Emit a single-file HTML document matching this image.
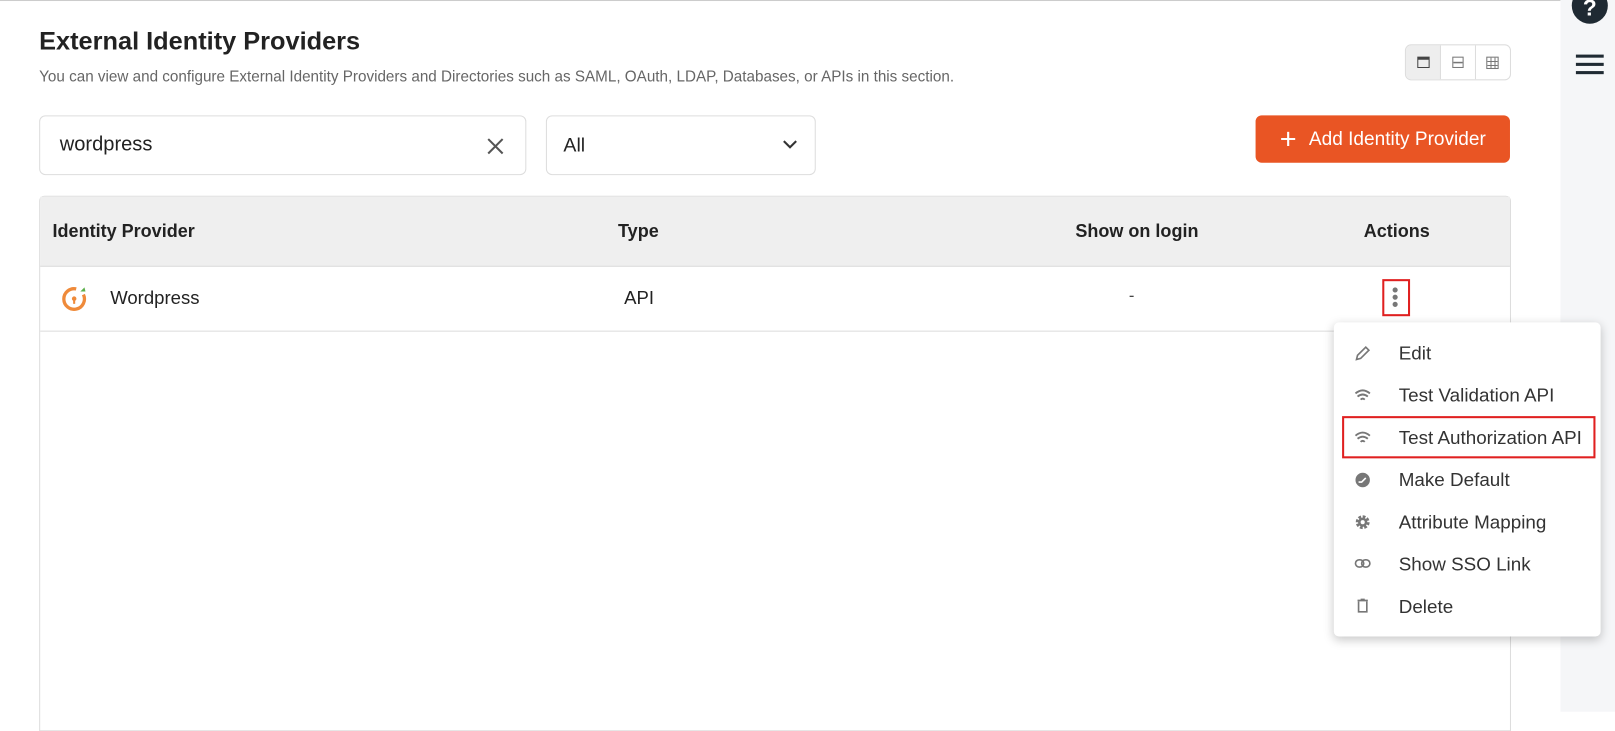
<!DOCTYPE html>
<html><head><style>
*{box-sizing:border-box;margin:0;padding:0}
body{width:1615px;height:691px;overflow:hidden;background:#fff;font-family:"Liberation Sans",sans-serif;color:#222;position:relative}
#w{position:absolute;left:0;top:0;width:1568px;height:671px;transform:scale(1.03);transform-origin:0 0}
.abs{position:absolute}
.side{left:1515px;top:0;width:100px;height:691px;background:#f5f6f8}
.topline{left:0;top:0;width:1515px;height:1px;background:#ccc}
h1{position:absolute;left:38px;top:27px;font-size:24.6px;font-weight:bold;color:#222}
.sub{left:38px;top:67px;font-size:14.8px;color:#666}
.box{border:1px solid #ddd;border-radius:6px;background:#fff}
.btn{left:1219px;top:112px;width:247px;height:46px;background:#e95524;border-radius:6px;color:#fff;font-size:18.5px;display:flex;align-items:center;justify-content:center;gap:12px}
.th{font-size:17.5px;font-weight:bold;color:#222;top:214px}
.menu{left:1295px;top:313px;width:259px;height:305px;background:#fff;border-radius:5px;box-shadow:0 3px 10px rgba(0,0,0,.22)}
.mi{position:absolute;left:63px;font-size:18.3px;color:#333}
.ic{position:absolute;left:20px}
</style></head><body><div id="w">
<div class="abs topline"></div>
<div class="abs side">
<div class="abs" style="left:11px;top:-12px;width:35px;height:35px;border-radius:50%;background:#1f2a33;color:#fff;font-weight:bold;font-size:22px;text-align:center;line-height:40px">?</div>
<div class="abs" style="left:15px;top:53px;width:27px;height:3px;background:#1f2a33;box-shadow:0 8px 0 #1f2a33,0 16px 0 #1f2a33"></div>
</div>
<h1>External Identity Providers</h1>
<div class="abs sub">You can view and configure External Identity Providers and Directories such as SAML, OAuth, LDAP, Databases, or APIs in this section.</div>
<div class="abs box" style="left:1364px;top:43px;width:103px;height:35px;display:flex;overflow:hidden">
<div style="width:35px;background:#eee;border-right:1px solid #ddd;display:flex;align-items:center;justify-content:center"><div style="width:12px;height:11px;border:1.5px solid #444;border-top-width:3px"></div></div>
<div style="width:34px;border-right:1px solid #ddd;display:flex;align-items:center;justify-content:center"><div style="width:11px;height:11px;border:1.5px solid #777;background:linear-gradient(#777,#777) center/100% 1.5px no-repeat"></div></div>
<div style="width:34px;display:flex;align-items:center;justify-content:center"><div style="width:12px;height:12px;border:1px solid #777;background:linear-gradient(90deg,transparent 3px,#777 3px,#777 4px,transparent 4px,transparent 7px,#777 7px,#777 8px,transparent 8px),linear-gradient(transparent 3px,#777 3px,#777 4px,transparent 4px,transparent 7px,#777 7px,#777 8px,transparent 8px)"></div></div>
</div>
<div class="abs box" style="left:38px;top:112px;width:473px;height:58px"><span class="abs" style="left:19px;top:16px;font-size:19.5px;color:#222">wordpress</span>
<svg class="abs" style="left:432px;top:19px" width="20" height="20" viewBox="0 0 20 20"><path d="M3 3L17 17M17 3L3 17" stroke="#555" stroke-width="2"/></svg></div>
<div class="abs box" style="left:530px;top:112px;width:262px;height:58px"><span class="abs" style="left:16px;top:18px;font-size:19px">All</span>
<svg class="abs" style="left:229px;top:22px" width="14" height="10" viewBox="0 0 14 10"><path d="M1 2L7 8L13 2" stroke="#333" stroke-width="2" fill="none"/></svg></div>
<div class="abs btn"><span style="font-size:28px;font-weight:300;line-height:20px">+</span><span>Add Identity Provider</span></div>
<div class="abs" style="left:38px;top:190px;width:1429px;height:520px;border:1px solid #ddd;border-radius:5px 5px 0 0">
<div style="height:68px;background:#efefef;border-bottom:1px solid #ddd"></div>
<div style="height:63px;border-bottom:1px solid #ddd"></div>
</div>
<div class="abs th" style="left:51px">Identity Provider</div>
<div class="abs th" style="left:600px">Type</div>
<div class="abs th" style="left:1044px">Show on login</div>
<div class="abs th" style="left:1324px">Actions</div>
<svg class="abs" style="left:58px;top:276px" width="28" height="28" viewBox="0 0 28 28"><path d="M16 4.5A10 10 0 1 0 23 10" stroke="#ef8a3a" stroke-width="3.2" fill="none"/><circle cx="14" cy="14" r="2.2" fill="#ef8a3a"/><rect x="13" y="14" width="2" height="5" fill="#ef8a3a"/><path d="M20 7L24 3L25 7Z" fill="#5bb04a"/></svg>
<div class="abs" style="left:107px;top:279px;font-size:18px">Wordpress</div>
<div class="abs" style="left:606px;top:279px;font-size:18px">API</div>
<div class="abs" style="left:1096px;top:279px;font-size:16px;color:#444">-</div>
<div class="abs" style="left:1342px;top:271px;width:27px;height:36px;border:2px solid #e02020"></div>
<div class="abs" style="left:1352px;top:279px;width:5px;height:5px;border-radius:50%;background:#777;box-shadow:0 7px 0 #777,0 14px 0 #777"></div>
<div class="abs menu">
<svg class="ic" style="top:22px" width="16" height="16" viewBox="0 0 16 16"><path d="M2 14L3 10L11 2L14 5L6 13Z" fill="none" stroke="#777" stroke-width="1.6"/></svg>
<div class="mi" style="top:19px">Edit</div>
<svg class="ic" style="top:64px" width="16" height="14" viewBox="0 0 16 14"><path d="M1 5Q8 -1 15 5M3 8Q8 4 13 8M6 11Q8 9 10 11" fill="none" stroke="#777" stroke-width="1.8"/></svg>
<div class="mi" style="top:60px">Test Validation API</div>
<div class="abs" style="left:8px;top:91px;width:246px;height:41px;border:2px solid #e02020"></div>
<svg class="ic" style="top:105px" width="16" height="14" viewBox="0 0 16 14"><path d="M1 5Q8 -1 15 5M3 8Q8 4 13 8M6 11Q8 9 10 11" fill="none" stroke="#777" stroke-width="1.8"/></svg>
<div class="mi" style="top:101px">Test Authorization API</div>
<svg class="ic" style="top:145px" width="16" height="16" viewBox="0 0 16 16"><circle cx="8" cy="8" r="7" fill="#777"/><path d="M4 10L7 10L11 6" stroke="#fff" stroke-width="1.6" fill="none"/></svg>
<div class="mi" style="top:142px">Make Default</div>
<svg class="ic" style="top:186px" width="16" height="16" viewBox="0 0 16 16"><circle cx="8" cy="8" r="5" fill="none" stroke="#777" stroke-width="3.5" stroke-dasharray="2.5 1.4"/><circle cx="8" cy="8" r="4.5" fill="#777"/><circle cx="8" cy="8" r="2" fill="#fff"/></svg>
<div class="mi" style="top:183px">Attribute Mapping</div>
<svg class="ic" style="top:229px" width="16" height="10" viewBox="0 0 16 10"><rect x="1" y="1.5" width="8" height="7" rx="3.5" fill="none" stroke="#777" stroke-width="1.6"/><rect x="7" y="1.5" width="8" height="7" rx="3.5" fill="none" stroke="#777" stroke-width="1.6"/></svg>
<div class="mi" style="top:224px">Show SSO Link</div>
<svg class="ic" style="top:267px" width="16" height="16" viewBox="0 0 16 16"><path d="M3 3H13M6 2H10M4 4V14H12V4" fill="none" stroke="#777" stroke-width="1.6"/></svg>
<div class="mi" style="top:265px">Delete</div>
</div>
</div></body></html>
